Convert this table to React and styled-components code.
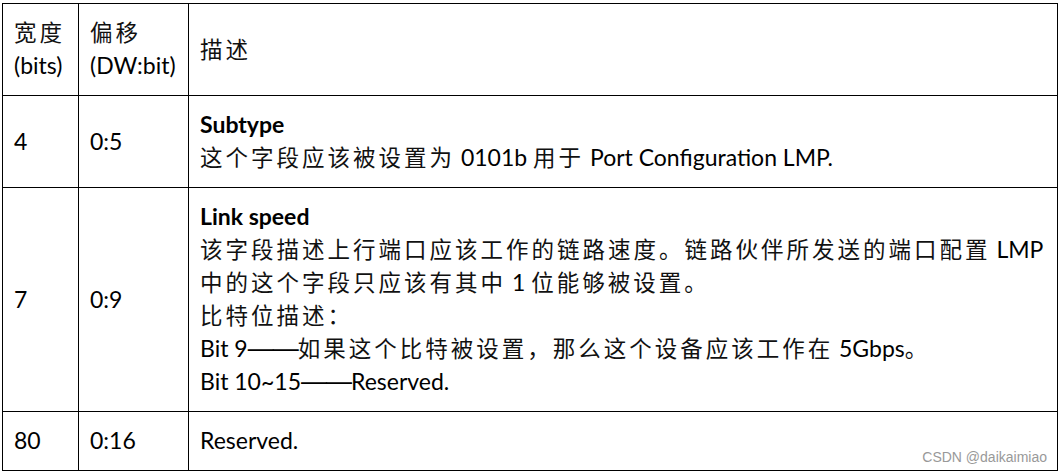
import styled, { createGlobalStyle } from 'styled-components';

const GlobalStyle = createGlobalStyle`
  html, body {
    margin: 0;
    padding: 0;
    background: #fff;
  }
`;

const SPLIT = /([\u3000-\u30ff\u4e00-\u9fff\uff00-\uffef]+|\u2014+)/;

// split a string so CJK runs and dashes get their own spans
const Mixed = ({ children }) =>
  String(children)
    .split(SPLIT)
    .filter(Boolean)
    .map((part, i) => {
      if (part[0] === '\u2014') return <Dash key={i}>{part}</Dash>;
      if (SPLIT.test(part)) return <Han key={i}>{part}</Han>;
      return part;
    });

const rows = [
  {
    width: '4',
    offset: '0:5',
    title: 'Subtype',
    lines: ['这个字段应该被设置为 0101b 用于 Port Configuration LMP.'],
  },
  {
    width: '7',
    offset: '0:9',
    title: 'Link speed',
    lines: [
      '该字段描述上行端口应该工作的链路速度。链路伙伴所发送的端口配置 LMP',
      '中的这个字段只应该有其中 1 位能够被设置。',
      '比特位描述：',
      'Bit 9——如果这个比特被设置，那么这个设备应该工作在 5Gbps。',
      'Bit 10~15——Reserved.',
    ],
  },
  {
    width: '80',
    offset: '0:16',
    lines: ['Reserved.'],
  },
];

const App = () => (
  <>
    <GlobalStyle />
    <Wrap>
      <Table>
        <colgroup>
          <col style={{ width: 76 }} />
          <col style={{ width: 110 }} />
          <col />
        </colgroup>
        <tbody>
          <tr>
            <Cell>
              <Line><Mixed>宽度</Mixed></Line>
              <Line>(bits)</Line>
            </Cell>
            <Cell>
              <Line><Mixed>偏移</Mixed></Line>
              <Line>(DW:bit)</Line>
            </Cell>
            <Cell>
              <Line><Mixed>描述</Mixed></Line>
            </Cell>
          </tr>
          {rows.map((row) => (
            <tr key={row.offset}>
              <Cell>{row.width}</Cell>
              <Cell>{row.offset}</Cell>
              <Cell>
                {row.title && <Title>{row.title}</Title>}
                {row.lines.map((line) => (
                  <Line key={line}>
                    <Mixed>{line}</Mixed>
                  </Line>
                ))}
              </Cell>
            </tr>
          ))}
        </tbody>
      </Table>
      <Watermark>CSDN @daikaimiao</Watermark>
    </Wrap>
  </>
);

const Wrap = styled.div`
  position: relative;
  width: 1056px;
  margin: 3px 0 0 2px;
`;

const Table = styled.table`
  width: 1056px;
  table-layout: fixed;
  border-collapse: collapse;
  font-family: Lato, 'Noto Sans CJK SC', sans-serif;
  font-size: 23px;
  line-height: 33px;
  color: #000;
`;

const Cell = styled.td`
  border: 1px solid #000;
  padding: 12px 8px 13px 11px;
  vertical-align: middle;
  white-space: nowrap;
`;

const Line = styled.div`
  height: 33px;
`;

const Title = styled.div`
  height: 33px;
  font-weight: 700;
`;

const Han = styled.span`
  font-family: 'Noto Sans CJK SC', sans-serif;
  font-size: 22.5px;
  line-height: 1;
  letter-spacing: 3px;
  color: #111;
`;

const Dash = styled.span`
  font-family: 'Liberation Sans', sans-serif;
  font-size: 26px;
  line-height: 1;
  letter-spacing: -1px;
`;

const Watermark = styled.div`
  position: absolute;
  right: 11px;
  bottom: 6px;
  font-family: 'Liberation Sans', Arial, sans-serif;
  font-size: 14px;
  line-height: 16px;
  color: #999;
`;

export default App;
